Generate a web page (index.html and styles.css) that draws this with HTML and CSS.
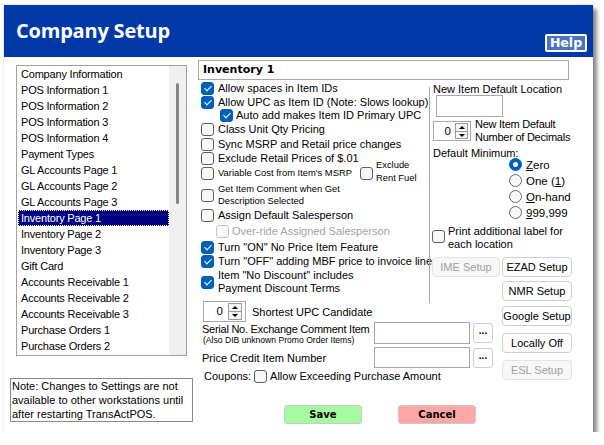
FILE: index.html
```html
<!DOCTYPE html>
<html>
<head>
<meta charset="utf-8">
<title>Company Setup</title>
<link rel="stylesheet" href="styles.css">
</head>
<body>
<div class="window">
  <div class="titlebar">
    <h1>Company Setup</h1>
    <button class="help">Help</button>
  </div>
  <div class="content">
    <div class="leftcol">
      <div class="list">
        <ul class="items">
          <li>Company Information</li>
          <li>POS Information 1</li>
          <li>POS Information 2</li>
          <li>POS Information 3</li>
          <li>POS Information 4</li>
          <li>Payment Types</li>
          <li>GL Accounts Page 1</li>
          <li>GL Accounts Page 2</li>
          <li>GL Accounts Page 3</li>
          <li class="sel">Inventory Page 1</li>
          <li>Inventory Page 2</li>
          <li>Inventory Page 3</li>
          <li>Gift Card</li>
          <li>Accounts Receivable 1</li>
          <li>Accounts Receivable 2</li>
          <li>Accounts Receivable 3</li>
          <li>Purchase Orders 1</li>
          <li>Purchase Orders 2</li>
        </ul>
        <div class="scroll"><div class="thumb"></div></div>
      </div>
      <div class="note">Note: Changes to Settings are not available to other workstations until after restarting TransActPOS.</div>
    </div>

    <div class="main">
      <div class="pagehdr">Inventory 1</div>
      <div class="grid">
        <div class="opts">
          <div class="row"><span class="cb on"></span>Allow spaces in Item IDs</div>
          <div class="row"><span class="cb on"></span>Allow UPC as Item ID (Note: Slows lookup)</div>
          <div class="row sub h12"><span class="cb on"></span>Auto add makes Item ID Primary UPC</div>
          <div class="row mt1"><span class="cb"></span>Class Unit Qty Pricing</div>
          <div class="row mt1"><span class="cb"></span>Sync MSRP and Retail price changes</div>
          <div class="row"><span class="cb"></span>Exclude Retail Prices of $.01</div>
          <div class="row mt1">
            <span class="cb"></span><span class="small">Variable Cost from Item's MSRP</span>
            <span class="cb excb"></span><span class="small two excl">Exclude<br>Rent Fuel</span>
          </div>
          <div class="row tall mt2"><span class="cb"></span><span class="small two">Get Item Comment when Get<br>Description Selected</span></div>
          <div class="row"><span class="cb"></span>Assign Default Salesperson</div>
          <div class="row indent disabled mt2"><span class="cb"></span>Over-ride Assigned Salesperson</div>
          <div class="row mt2"><span class="cb on"></span>Turn "ON" No Price Item Feature</div>
          <div class="row"><span class="cb on"></span>Turn "OFF" adding MBF price to invoice line</div>
          <div class="row tall mt1"><span class="cb on"></span><span class="two l13">Item "No Discount" includes<br>Payment Discount Terms</span></div>
        </div>

        <div class="group">
          <div class="glabel">New Item Default Location</div>
          <div class="tb loc"></div>
          <div class="spinrow">
            <div class="spin sm"><span class="val">0</span><span class="arrows"><span class="up"></span><span class="dn"></span></span></div>
            <span class="two l13 tight">New Item Default<br>Number of Decimals</span>
          </div>
          <div class="dmin">Default Minimum:</div>
          <div class="radios">
            <div class="rrow"><span class="rd on"></span><span><u>Z</u>ero</span></div>
            <div class="rrow"><span class="rd"></span><span>One (<u>1</u>)</span></div>
            <div class="rrow"><span class="rd"></span><span><u>O</u>n-hand</span></div>
            <div class="rrow"><span class="rd"></span><span><u>9</u>99,999</span></div>
          </div>
          <div class="printrow"><span class="cb"></span><span class="two l13">Print additional label for<br>each location</span></div>
          <div class="btnrow">
            <button class="wbtn ime dis">IME Setup</button>
            <button class="wbtn">EZAD Setup</button>
          </div>
          <button class="wbtn nmr">NMR Setup</button>
        </div>

        <div class="fields">
          <div class="frow upc">
            <div class="spin lg"><span class="val">0</span><span class="arrows"><span class="up"></span><span class="dn"></span></span></div>
            <span>Shortest UPC Candidate</span>
          </div>
          <div class="frow serial">
            <div class="flabel"><div class="l13 tight">Serial No. Exchange Comment Item</div><div class="tiny">(Also DIB unknown Promo Order Items)</div></div>
            <span class="tb item"></span>
            <button class="dots">...</button>
          </div>
          <div class="frow price">
            <div class="flabel">Price Credit Item Number</div>
            <span class="tb item"></span>
            <button class="dots">...</button>
          </div>
          <div class="frow coupons"><span>Coupons:</span><span class="cb"></span><span>Allow Exceeding Purchase Amount</span></div>
        </div>

        <div class="btncol">
          <button class="wbtn g">Google Setup</button>
          <button class="wbtn lo">Locally Off</button>
          <button class="wbtn lo dis">ESL Setup</button>
        </div>
      </div>
      <div class="actions">
        <button class="act save">Save</button>
        <button class="act cancel">Cancel</button>
      </div>
    </div>
  </div>
</div>
</body>
</html>
```

FILE: styles.css
```css
body {
  margin: 0;
  background: #fff;
  font-family: "Liberation Sans", Arial, sans-serif;
  font-size: 11px;
  color: #000;
}

.window {
  margin: 5px 0 0 4px;
  width: 589px;
  height: 427px;
  background: #fff;
  box-shadow: 0 0 1px rgba(0,0,0,0.35), 4px 4px 4px rgba(0,0,0,0.45);
  display: flex;
  flex-direction: column;
  overflow: hidden;
}

.titlebar {
  flex: none;
  height: 52px;
  background: #0038a8;
  display: flex;
  justify-content: space-between;
  padding: 0 6px 0 12px;
  box-sizing: border-box;
}
.titlebar h1 {
  margin: 14px 0 0;
  font: 700 20px/24px "Open Sans", sans-serif;
  color: #fff;
  letter-spacing: -0.2px;
}
.help {
  align-self: flex-end;
  margin-bottom: 5px;
  width: 42px;
  height: 18px;
  padding: 0;
  background: #4b73c5;
  border: 2px solid #fff;
  border-radius: 2px;
  color: #fff;
  font: 700 12.5px/14px "DejaVu Sans", sans-serif;
}

.content {
  display: flex;
  flex: 1;
  min-height: 0;
}

/* left column */
.leftcol {
  width: 194px;
  flex: none;
  display: flex;
  flex-direction: column;
}
.list {
  flex: none;
  margin: 8px 0 0 12px;
  width: 171px;
  height: 291px;
  border: 1px solid #a0a0a0;
  box-sizing: border-box;
  display: flex;
}
.items {
  list-style: none;
  margin: 0;
  padding: 0;
  flex: 1;
}
.items li {
  height: 16px;
  line-height: 16px;
  margin-left: 1px;
  padding-left: 3px;
  white-space: nowrap;
  letter-spacing: -0.2px;
}
.items li.sel {
  background: #000080;
  color: #fff;
  outline: 1px dotted #f0f0c0;
  outline-offset: -1px;
}
.scroll {
  width: 17px;
  background: #f0f0f0;
}
.thumb {
  width: 3px;
  height: 121px;
  margin: 17px 0 0 7px;
  background: #858585;
  border-radius: 2px;
}
.note {
  flex: none;
  margin: 22px 0 0 6px;
  width: 183px;
  height: 44px;
  box-sizing: border-box;
  border: 1px solid #8a8a8a;
  padding: 0 1px;
  line-height: 14px;
}

/* main */
.main {
  flex: 1;
  display: flex;
  flex-direction: column;
}
.pagehdr {
  flex: none;
  margin-top: 3px;
  width: 371px;
  height: 20px;
  box-sizing: border-box;
  border: 1px solid #a8a8a8;
  padding-left: 4px;
  font: 700 11px/18px "DejaVu Sans", sans-serif;
}
.grid {
  margin-top: 1px;
  display: grid;
  grid-template-columns: 231px 71px 72px;
  white-space: nowrap;
}
.opts { grid-column: 1; grid-row: 1; }
.group { grid-column: 2 / 4; grid-row: 1; }
.fields { grid-column: 1 / 3; grid-row: 2; }
.btncol { grid-column: 3; grid-row: 2; }

/* checkbox & radio */
.cb {
  flex: none;
  width: 13px;
  height: 13px;
  box-sizing: border-box;
  border: 1px solid #5f5f5f;
  border-radius: 3px;
  background: #f7f7f7;
  display: inline-flex;
  align-items: center;
  justify-content: center;
}
.cb.on {
  background: #005fb8;
  border-color: #005fb8;
}
.cb.on::after {
  content: "";
  width: 3px;
  height: 6px;
  border: solid #fff;
  border-width: 0 1.3px 1.3px 0;
  transform: translateY(-1px) rotate(45deg);
}
.rd {
  flex: none;
  width: 13px;
  height: 13px;
  box-sizing: border-box;
  border: 1px solid #6a6a6a;
  border-radius: 50%;
  background: #f7f7f7;
  display: inline-flex;
  align-items: center;
  justify-content: center;
}
.rd.on {
  background: #005fb8;
  border-color: #005fb8;
}
.rd.on::after {
  content: "";
  width: 5px;
  height: 5px;
  border-radius: 50%;
  background: #fff;
}

/* option rows */
.row {
  display: flex;
  align-items: center;
  gap: 4px;
  height: 14px;
  line-height: 14px;
  padding-left: 3px;
}
.row.sub { padding-left: 22px; gap: 3px; }
.row.h12 { height: 12px; }
.row.indent { padding-left: 18px; gap: 3px; }
.row.tall { height: 26px; }
.row.disabled { color: #a3a3a3; }
.row.disabled .cb { border-color: #c4c4c4; background: #fafafa; }
.mt1 { margin-top: 1px; }
.mt2 { margin-top: 2px; }
.small { font-size: 9.4px; }
.two { line-height: 12.4px; }
.l13 { line-height: 13.3px; }
.tight { letter-spacing: -0.25px; }
.excb { margin-left: 4px; }
.excl { margin-left: -1px; margin-bottom: 3px; }

/* group */
.group {
  margin-top: 6px;
  border-left: 1px solid #a8a8a8;
  padding: 0 0 2px 3px;
  display: flex;
  flex-direction: column;
  align-items: flex-start;
}
.glabel {
  margin-top: -5px;
  line-height: 14px;
}
.tb {
  display: block;
  box-sizing: border-box;
  border: 1px solid #a8a8a8;
  background: #fff;
}
.tb.loc {
  margin: -1px 0 0 3px;
  width: 67px;
  height: 22px;
}
.spinrow {
  margin-top: 1px;
  display: flex;
  align-items: center;
  gap: 4px;
}
.spin {
  flex: none;
  box-sizing: border-box;
  border: 1px solid #a8a8a8;
  background: #fff;
  display: flex;
  align-items: stretch;
}
.spin.sm { width: 38px; height: 20px; }
.spin.lg { width: 43px; height: 21px; }
.spin .val {
  flex: 1;
  text-align: right;
  padding-right: 4px;
  line-height: 18px;
  font-size: 11.5px;
}
.spin.lg .val { line-height: 19px; padding-right: 5px; }
.arrows {
  width: 14px;
  margin: 1px 3px 1px 0;
  display: flex;
  flex-direction: column;
}
.spin.sm .arrows { width: 13px; margin-right: 2px; }
.arrows span {
  flex: 1;
  box-sizing: border-box;
  border: 1px solid #9a9a9a;
  background: #f6f6f6;
  display: flex;
  align-items: center;
  justify-content: center;
}
.arrows .dn { border-top: none; }
.arrows .up::after {
  content: "";
  border-left: 3px solid transparent;
  border-right: 3px solid transparent;
  border-bottom: 3px solid #000;
}
.arrows .dn::after {
  content: "";
  border-left: 3px solid transparent;
  border-right: 3px solid transparent;
  border-top: 3px solid #000;
}
.dmin {
  margin-top: 1px;
  line-height: 14px;
}
.radios {
  margin: -3px 0 0 76px;
}
.rrow {
  display: flex;
  align-items: center;
  gap: 4px;
  height: 16px;
  line-height: 16px;
  font-size: 11.5px;
}
.printrow {
  margin: 4px 0 0 -1px;
  display: flex;
  align-items: flex-start;
  gap: 3px;
}
.printrow .cb { margin-top: 5px; }
.btnrow {
  margin: 6px 0 0 -1px;
  display: flex;
  gap: 2px;
}

/* window buttons */
.wbtn {
  flex: none;
  width: 70px;
  height: 20px;
  padding: 0;
  box-sizing: border-box;
  border: 1px solid #cfcfcf;
  border-radius: 4px;
  background: #fdfdfd;
  font-family: "Liberation Sans", Arial, sans-serif;
  font-size: 11px;
  color: #000;
  white-space: nowrap;
}
.wbtn.ime { width: 68px; }
.wbtn.dis {
  color: #a0a0a0;
  background: #f7f7f7;
  border-color: #e4e4e4;
}
.wbtn.nmr { margin: 4px 0 0 69px; }
.btncol {
  padding-left: 2px;
  display: flex;
  flex-direction: column;
}
.wbtn.g { margin-top: 3px; }
.wbtn.lo { margin-top: 7px; }

/* fields */
.frow {
  display: flex;
  align-items: center;
}
.frow.upc {
  margin-top: -2px;
  padding-left: 5px;
  gap: 6px;
}
.frow.serial {
  align-items: flex-start;
}
.flabel {
  flex: none;
  width: 176px;
  padding-left: 4px;
  box-sizing: border-box;
}
.frow.serial .flabel { padding-top: 1px; }
.tiny {
  font-size: 8.6px;
  line-height: 9px;
  padding-left: 1px;
}
.tb.item {
  flex: none;
  width: 96px;
  height: 22px;
}
.dots {
  flex: none;
  margin-left: 3px;
  width: 20px;
  height: 20px;
  padding: 0 0 4px;
  box-sizing: border-box;
  border: 1px solid #cfcfcf;
  border-radius: 3px;
  background: #fdfdfd;
  font: 700 10px/10px "Liberation Sans", Arial, sans-serif;
  color: #000;
}
.frow.serial .dots { margin-top: 1px; }
.frow.price { margin-top: 2px; height: 21px; }
.frow.price .tb.item { height: 21px; }
.frow.coupons {
  margin-top: 1px;
  height: 14px;
  padding-left: 6px;
  gap: 3px;
}

/* actions */
.actions {
  margin: 22px 0 0 86px;
  display: flex;
  gap: 36px;
}
.act {
  width: 78px;
  height: 19px;
  padding: 0;
  box-sizing: border-box;
  border: 1px solid #c9c9c9;
  border-radius: 3px;
  font: 700 10px/17px "DejaVu Sans", sans-serif;
  color: #000;
}
.save { background: #a6fba0; }
.cancel { background: #ffa6a6; }
```
